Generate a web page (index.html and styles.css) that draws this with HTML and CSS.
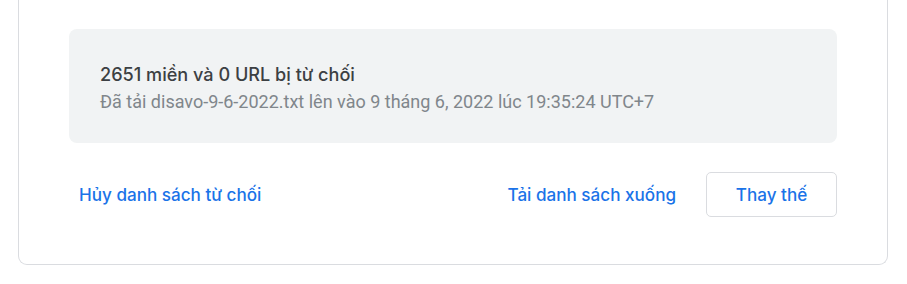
FILE: index.html
```html
<!DOCTYPE html>
<html lang="vi">
<head>
<meta charset="utf-8">
<title>Danh sách từ chối</title>
<link rel="stylesheet" href="styles.css">
</head>
<body>
<div class="card">
  <div class="info">
    <div class="info-title">2651 miền và 0 URL bị từ chối</div>
    <div class="info-sub">Đã tải disavo-9-6-2022.txt lên vào 9 tháng 6, 2022 lúc 19:35:24 UTC+7</div>
  </div>
  <div class="actions">
    <button class="text-btn">Hủy danh sách từ chối</button>
    <div class="spacer"></div>
    <button class="text-btn">Tải danh sách xuống</button>
    <button class="outline-btn">Thay thế</button>
  </div>
</div>
</body>
</html>
```

FILE: styles.css
```css
html, body {
  margin: 0;
  padding: 0;
  background: #ffffff;
}

body {
  font-family: Roboto, "Liberation Sans", Arial, sans-serif;
}

.card {
  margin: 0 19px 0 18px;
  border: 1px solid #dadce0;
  border-top: none;
  border-radius: 0 0 9px 9px;
  padding: 29px 50px 47px 50px;
}

.info {
  background: #f1f3f4;
  border-radius: 8px;
  height: 114px;
  box-sizing: border-box;
  padding: 32px 31px 28px;
}

.info-title {
  font-family: Inter, "Open Sans", Roboto, sans-serif;
  font-weight: 500;
  font-size: 18.1px;
  line-height: 27px;
  color: #3c4043;
}

.info-sub {
  font-family: Roboto, sans-serif;
  font-size: 18px;
  line-height: 27px;
  color: #80868b;
}

.actions {
  margin-top: 29px;
  display: flex;
  align-items: center;
}

.spacer {
  flex: 1;
}

.text-btn {
  font-family: Inter, "Open Sans", Roboto, sans-serif;
  font-weight: 500;
  font-size: 17.1px;
  color: #1a73e8;
  background: transparent;
  border: none;
  height: 45px;
  padding: 0 10px;
  cursor: pointer;
}

.outline-btn {
  font-family: Inter, "Open Sans", Roboto, sans-serif;
  font-weight: 500;
  font-size: 17.1px;
  color: #1a73e8;
  background: #ffffff;
  border: 1px solid #dadce0;
  border-radius: 5px;
  height: 45px;
  width: 131px;
  margin-left: 20px;
  cursor: pointer;
}
```
